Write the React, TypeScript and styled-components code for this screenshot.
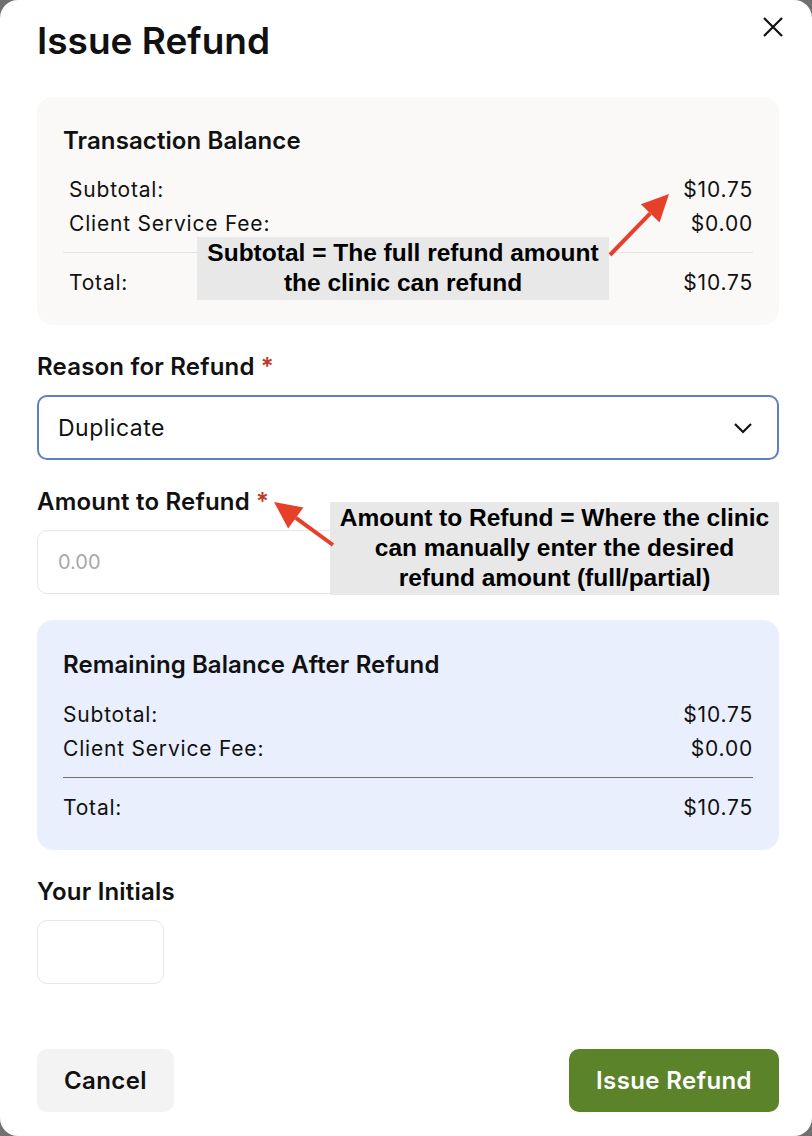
import React from 'react';
import styled, { createGlobalStyle } from 'styled-components';

const GlobalStyle = createGlobalStyle`
    html, body {
        margin: 0;
        padding: 0;
        background: #707070;
    }
    body {
        font-family: Inter, "Noto Sans", sans-serif;
        color: #111;
    }
    * {
        box-sizing: border-box;
    }
`;

const Modal = styled.div`
    position: relative;
    width: 812px;
    min-height: 1136px;
    background: #fff;
    border-radius: 18px;
    padding: 21px 33px 24px 37px;
    display: flex;
    flex-direction: column;
`;

const Header = styled.div`
    display: flex;
    justify-content: space-between;
    align-items: flex-start;
    height: 40px;
`;

const Title = styled.h1`
    margin: 0;
    font-size: 37px;
    line-height: 40px;
    font-weight: 600;
    letter-spacing: 0;
`;

const CloseButton = styled.button`
    border: none;
    background: none;
    padding: 0;
    margin: -6px -6px 0 0;
    width: 24px;
    height: 24px;
    cursor: pointer;
    display: flex;
    align-items: center;
    justify-content: center;
`;

const Card = styled.section<{ $tone: 'sand' | 'blue' }>`
    position: relative;
    border-radius: 16px;
    padding: 30px 26px 26px 26px;
    background: ${p => (p.$tone === 'sand' ? '#faf9f7' : '#e9effc')};
`;

const CardTitle = styled.h2`
    margin: 0 0 17px;
    font-size: 24px;
    line-height: 28px;
    font-weight: 600;
    letter-spacing: 0.1px;
`;

const Rows = styled.div<{ $indent: number }>`
    padding-left: ${p => p.$indent}px;
`;

const Row = styled.div`
    display: flex;
    justify-content: space-between;
    align-items: center;
    height: 34px;
    font-size: 21px;
    letter-spacing: 0.8px;
`;

const Divider = styled.hr<{ $dark?: boolean }>`
    border: none;
    height: 1px;
    margin: 12px 0 12px;
    background: ${p => (p.$dark ? '#6f6f6f' : '#e6e4e1')};
`;

const FieldLabel = styled.label`
    display: block;
    font-size: 24px;
    line-height: 28px;
    font-weight: 600;
    letter-spacing: 0.2px;
    margin-bottom: 14px;
`;

const Required = styled.span`
    color: #c0392b;
    margin-left: 6px;
`;

const Field = styled.div<{ $top: number }>`
    position: relative;
    margin-top: ${p => p.$top}px;
`;

const Select = styled.div`
    display: flex;
    align-items: center;
    justify-content: space-between;
    height: 65px;
    padding: 0 24px 0 19px;
    border: 2px solid #5c7fc6;
    border-radius: 10px;
    font-size: 23px;
    letter-spacing: 0.5px;
`;

const TextInput = styled.input<{ $width?: number }>`
    display: block;
    width: ${p => (p.$width ? `${p.$width}px` : '100%')};
    height: 64px;
    border: 1px solid #e7e7e7;
    border-radius: 10px;
    padding: 0 20px;
    font-family: inherit;
    font-size: 20px;
    color: #111;
    outline: none;

    &::placeholder {
        color: #a8a8a8;
    }
`;

const Note = styled.div`
    position: absolute;
    background: #e8e8e8;
    color: #000;
    font-family: "Liberation Sans", Arial, sans-serif;
    font-weight: 700;
    font-size: 24.5px;
    line-height: 30px;
    text-align: center;
    white-space: nowrap;
`;

const Arrow = styled.svg`
    position: absolute;
    overflow: visible;
`;

const Footer = styled.div`
    display: flex;
    justify-content: space-between;
    margin-top: 65px;
`;

const Button = styled.button<{ $primary?: boolean }>`
    height: 63px;
    border: none;
    border-radius: 10px;
    padding: 0 27px;
    font-family: inherit;
    font-size: 24px;
    font-weight: 600;
    letter-spacing: 0.4px;
    cursor: pointer;
    background: ${p => (p.$primary ? '#5b832a' : '#f3f3f3')};
    color: ${p => (p.$primary ? '#fff' : '#111')};
`;

const RedArrow = ({ x1, y1, x2, y2 }: { x1: number; y1: number; x2: number; y2: number }) => {
    const angle = Math.atan2(y2 - y1, x2 - x1);
    const head = 27;
    const wing = 13;
    const bx = x2 - head * Math.cos(angle);
    const by = y2 - head * Math.sin(angle);
    const px = -Math.sin(angle) * wing;
    const py = Math.cos(angle) * wing;
    return (
        <>
            <line x1={x1} y1={y1} x2={bx} y2={by} stroke="#e6402a" strokeWidth={4} />
            <polygon
                points={`${x2},${y2} ${bx + px},${by + py} ${bx - px},${by - py}`}
                fill="#e6402a"
            />
        </>
    );
};

export default function App() {
    return (
        <>
            <GlobalStyle />
            <Modal>
                <Header>
                    <Title>Issue Refund</Title>
                    <CloseButton aria-label="Close">
                        <svg width="22" height="22" viewBox="0 0 22 22">
                            <path d="M2 2 L20 20 M20 2 L2 20" stroke="#111" strokeWidth="2.2" />
                        </svg>
                    </CloseButton>
                </Header>

                <Card $tone="sand" style={{ marginTop: 36 }}>
                    <CardTitle>Transaction Balance</CardTitle>
                    <Rows $indent={6}>
                        <Row>
                            <span>Subtotal:</span>
                            <span>$10.75</span>
                        </Row>
                        <Row>
                            <span>Client Service Fee:</span>
                            <span>$0.00</span>
                        </Row>
                    </Rows>
                    <Divider />
                    <Rows $indent={6}>
                        <Row>
                            <span>Total:</span>
                            <span>$10.75</span>
                        </Row>
                    </Rows>
                    <Note style={{ left: 160, top: 140, width: 412, height: 63, paddingTop: 1 }}>
                        Subtotal = The full refund amount
                        <br />
                        the clinic can refund
                    </Note>
                    <Arrow width="1" height="1" style={{ left: 0, top: 0 }}>
                        <RedArrow x1={573} y1={158} x2={632} y2={97} />
                    </Arrow>
                </Card>

                <Field $top={28}>
                    <FieldLabel>
                        Reason for Refund<Required>*</Required>
                    </FieldLabel>
                    <Select>
                        <span>Duplicate</span>
                        <svg width="20" height="12" viewBox="0 0 20 12">
                            <path d="M2 2 L10 10 L18 2" fill="none" stroke="#111" strokeWidth="2.2" />
                        </svg>
                    </Select>
                </Field>

                <Field $top={28}>
                    <FieldLabel>
                        Amount to Refund<Required>*</Required>
                    </FieldLabel>
                    <TextInput placeholder="0.00" />
                    <Note style={{ left: 293, top: 14, width: 449, height: 93, paddingTop: 1 }}>
                        Amount to Refund = Where the clinic
                        <br />
                        can manually enter the desired
                        <br />
                        refund amount (full/partial)
                    </Note>
                    <Arrow width="1" height="1" style={{ left: 0, top: 0 }}>
                        <RedArrow x1={296} y1={57} x2={237} y2={14} />
                    </Arrow>
                </Field>

                <Card $tone="blue" style={{ marginTop: 26, paddingTop: 31 }}>
                    <CardTitle style={{ marginBottom: 18 }}>Remaining Balance After Refund</CardTitle>
                    <Rows $indent={0}>
                        <Row>
                            <span>Subtotal:</span>
                            <span>$10.75</span>
                        </Row>
                        <Row>
                            <span>Client Service Fee:</span>
                            <span>$0.00</span>
                        </Row>
                    </Rows>
                    <Divider $dark />
                    <Rows $indent={0}>
                        <Row>
                            <span>Total:</span>
                            <span>$10.75</span>
                        </Row>
                    </Rows>
                </Card>

                <Field $top={28}>
                    <FieldLabel style={{ marginBottom: 14 }}>Your Initials</FieldLabel>
                    <TextInput $width={127} />
                </Field>

                <Footer>
                    <Button>Cancel</Button>
                    <Button $primary>Issue Refund</Button>
                </Footer>
            </Modal>
        </>
    );
}
